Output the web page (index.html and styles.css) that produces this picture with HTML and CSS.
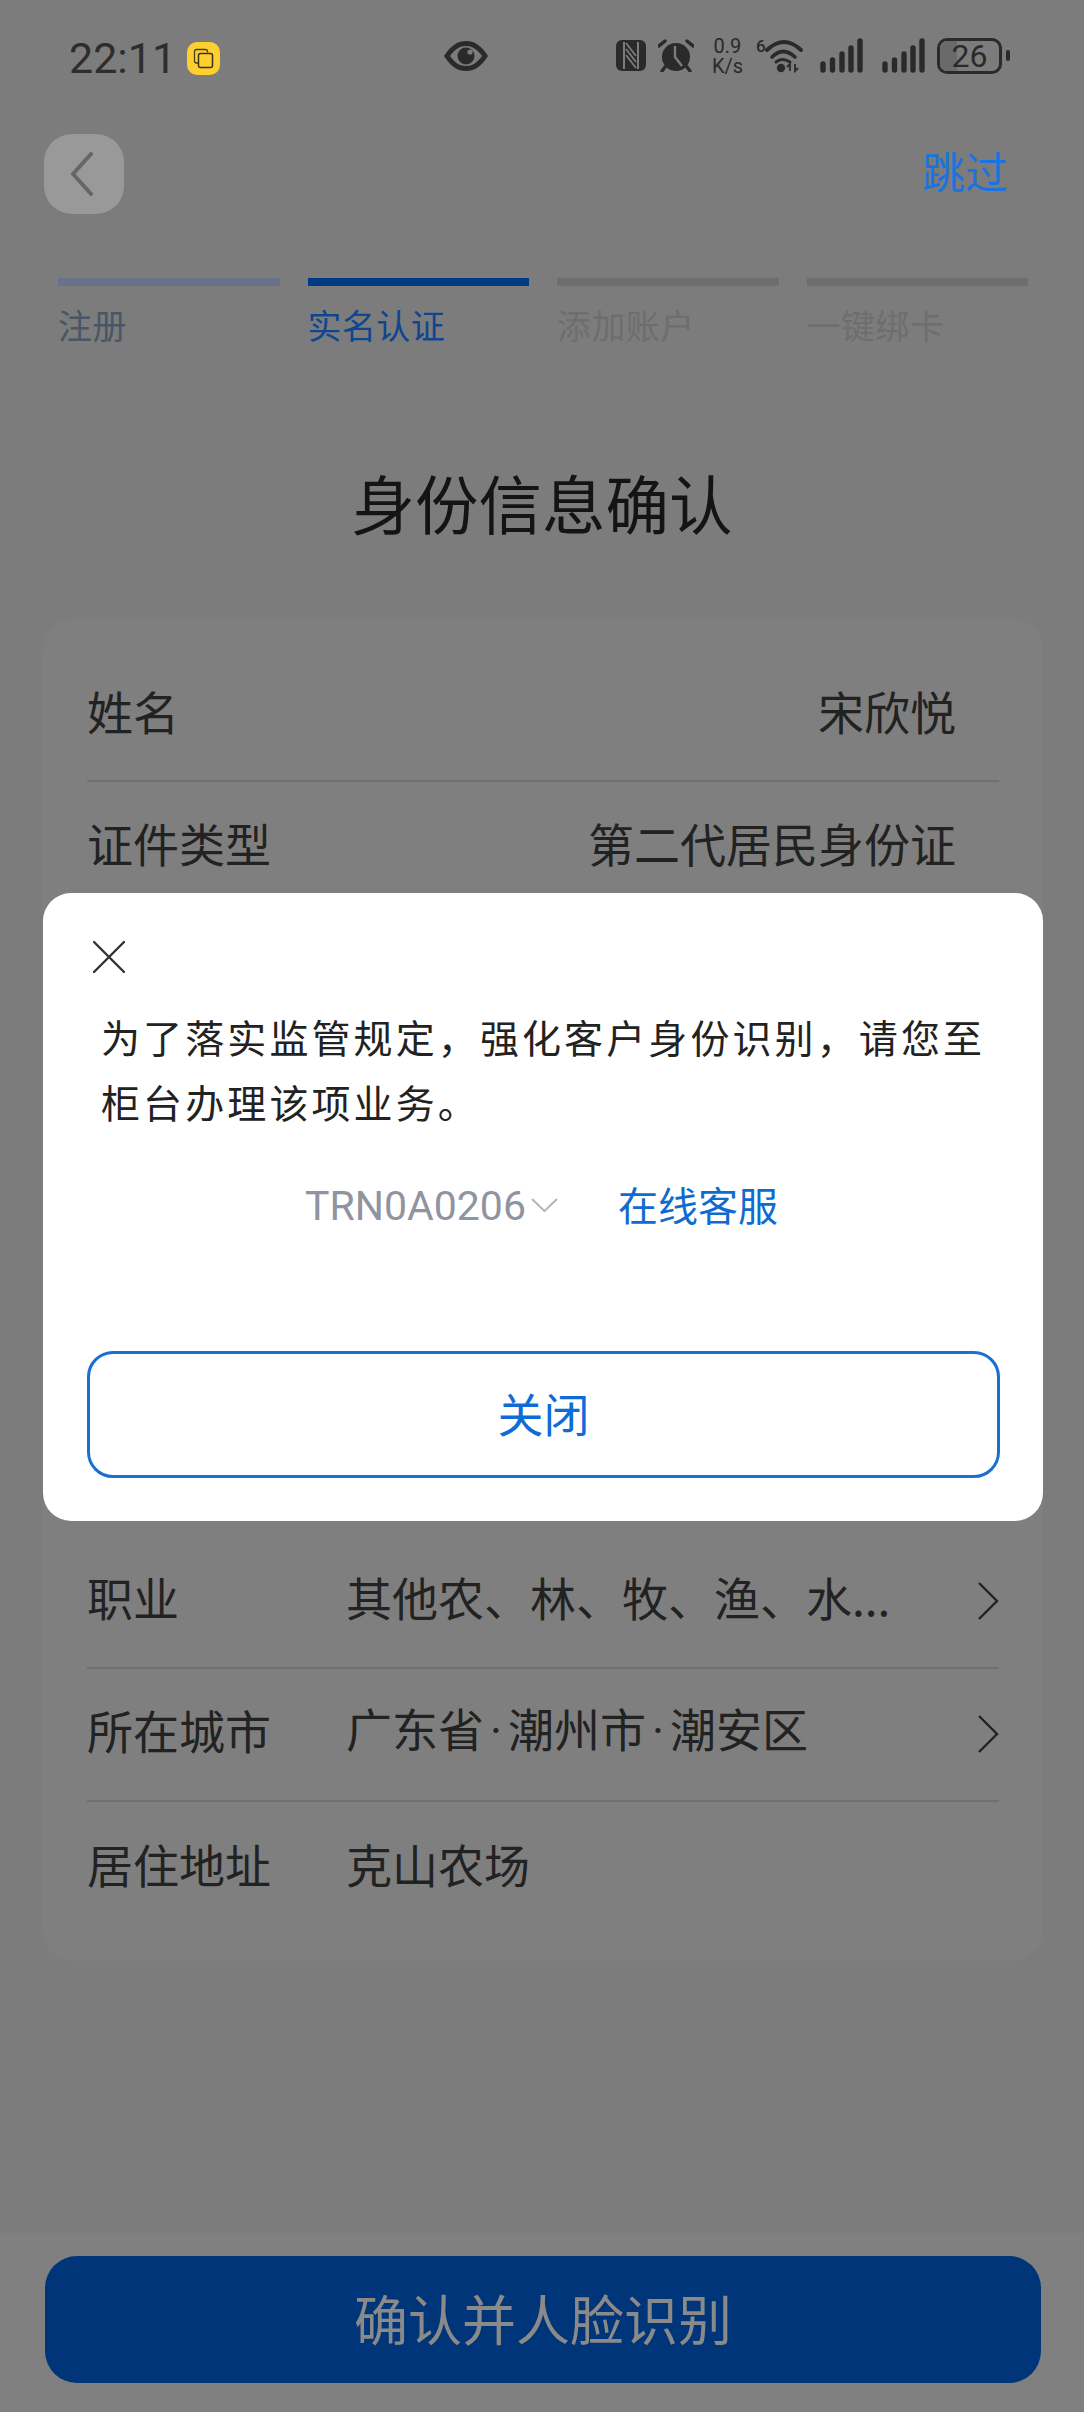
FILE: index.html
```html
<!DOCTYPE html>
<html lang="zh-CN">
<head>
<meta charset="utf-8">
<title>身份信息确认</title>
<link rel="stylesheet" href="styles.css">
</head>
<body>
<div class="app">
  <header class="status">
    <div class="status-left">
      <span class="time">22:11</span>
      <svg class="rec" width="33" height="33" viewBox="0 0 33 33"><rect width="33" height="33" rx="10" fill="#fdd02f"/><path d="M11 21H9.500a2 2 0 0 1-2-2V9.500a2 2 0 0 1 2-2h9a2 2 0 0 1 2 2v1" fill="none" stroke="#4a4020" stroke-width="1.300"/><rect x="11.500" y="11.500" width="14" height="14" rx="2" fill="none" stroke="#3a3320" stroke-width="1.500"/></svg>
    </div>
    <svg class="eye" width="46" height="30" viewBox="0 0 46 30"><path d="M1 15C8 4 15 0 23 0s15 4 22 15c-7 11-14 15-22 15S8 26 1 15z" fill="#2a2a2a"/><path d="M7 15c5-7 10-10 16-10s11 3 16 10c-5 7-10 10-16 10S12 22 7 15z" fill="#7c7c7c"/><circle cx="23" cy="15" r="8.500" fill="#2a2a2a"/><circle cx="27" cy="11" r="2.600" fill="#7c7c7c"/></svg>
    <div class="status-right">
      <svg width="30" height="31" viewBox="0 0 30 31"><rect width="30" height="31" rx="6" fill="#2a2a2a"/><path d="M8 2v27M22 2v27" stroke="#7c7c7c" stroke-width="2"/><path d="M10 9l10 13M10 3l10 13M10 15l10 13" stroke="#7c7c7c" stroke-width="1.800"/></svg>
      <svg width="36" height="33" viewBox="0 0 36 33"><path d="M1 7l6-5M35 7l-6-5" stroke="#2a2a2a" stroke-width="3.400" stroke-linecap="round"/><path d="M7 28l-3 4M29 28l3 4" stroke="#2a2a2a" stroke-width="3.400" stroke-linecap="round"/><circle cx="18" cy="18" r="14" fill="#2a2a2a"/><path d="M17 7v11l7 9" fill="none" stroke="#7c7c7c" stroke-width="2.400"/></svg>
      <div class="speed"><span>0.9</span><span>K/s</span></div>
      <div class="wifi">
        <span class="wifi-six">6</span>
        <svg width="40" height="35" viewBox="0 0 40 35"><g fill="none" stroke="#2a2a2a" stroke-linecap="round"><path d="M2 12Q19-4 36 12" stroke-width="4"/><path d="M7 19Q18 8 30 19" stroke-width="3.600"/><path d="M11 24Q17 19 25 24" stroke-width="3"/></g><circle cx="16" cy="30" r="4.200" fill="#2a2a2a"/><path d="M25 33v-7l-3 3M30 26v7l3-3" fill="none" stroke="#2a2a2a" stroke-width="1.800"/></svg>
      </div>
      <svg class="signal" width="43" height="35" viewBox="0 0 43 35"><g stroke="#2a2a2a" stroke-width="5.400" stroke-linecap="round"><path d="M3 26v6M12.500 22v10M22 16v16M31 10v22M40 3v29"/></g></svg>
      <svg class="signal" width="43" height="35" viewBox="0 0 43 35"><g stroke="#2a2a2a" stroke-width="5.400" stroke-linecap="round"><path d="M3 26v6M12.500 22v10M22 16v16M31 10v22M40 3v29"/></g></svg>
      <div class="battery">
        <div class="battery-body"><span class="battery-fill"></span><span class="battery-num">26</span></div>
        <span class="battery-nub"></span>
      </div>
    </div>
  </header>

  <nav class="topbar">
    <button class="back" type="button"><svg width="24" height="44" viewBox="0 0 24 44"><path d="M21 2L3 22l18 20" fill="none" stroke="#666" stroke-width="4" stroke-linecap="round" stroke-linejoin="round"/></svg></button>
    <span class="skip">跳过</span>
  </nav>

  <ol class="steps">
    <li class="step step-done"><span class="step-bar"></span><span class="step-label">注册</span></li>
    <li class="step step-current"><span class="step-bar"></span><span class="step-label">实名认证</span></li>
    <li class="step step-todo"><span class="step-bar"></span><span class="step-label">添加账户</span></li>
    <li class="step step-todo"><span class="step-bar"></span><span class="step-label">一键绑卡</span></li>
  </ol>

  <h1 class="title">身份信息确认</h1>

  <section class="card">
    <div class="row row-first"><span class="row-key">姓名</span><span class="row-value row-value-end">宋欣悦</span></div>
    <div class="row row-second"><span class="row-key">证件类型</span><span class="row-value row-value-end">第二代居民身份证</span></div>
    <div class="row-gap"></div>
    <div class="row row-line"><span class="row-key">职业</span><span class="row-value">其他农、林、牧、渔、水...</span>
      <svg class="chev" width="22" height="38" viewBox="0 0 22 38"><path d="M2 1l18 18L2 37" fill="none" stroke="#222" stroke-width="2.400"/></svg></div>
    <div class="row row-line"><span class="row-key">所在城市</span><span class="row-value">广东省<span class="sep">·</span>潮州市<span class="sep">·</span>潮安区</span>
      <svg class="chev" width="22" height="38" viewBox="0 0 22 38"><path d="M2 1l18 18L2 37" fill="none" stroke="#222" stroke-width="2.400"/></svg></div>
    <div class="row"><span class="row-key">居住地址</span><span class="row-value">克山农场</span></div>
  </section>

  <footer class="footer">
    <button class="confirm" type="button">确认并人脸识别</button>
  </footer>

  <div class="modal">
    <svg class="modal-close" width="32" height="32" viewBox="0 0 32 32"><path d="M1 1l30 30M31 1L1 31" stroke="#333" stroke-width="2.400" stroke-linecap="round"/></svg>
    <p class="modal-text">为了落实监管规定，强化客户身份识别，请您至柜台办理该项业务。</p>
    <div class="modal-code">
      <span class="code">TRN0A0206</span>
      <svg class="code-chev" width="27" height="14" viewBox="0 0 27 14"><path d="M1 1l12.500 12L26 1" fill="none" stroke="#b5b5b5" stroke-width="2"/></svg>
      <span class="service">在线客服</span>
    </div>
    <button class="modal-btn" type="button">关闭</button>
  </div>
</div>
</body>
</html>
```
FILE: styles.css
```css
* { box-sizing: border-box; }
html, body { margin: 0; padding: 0; }
body {
  width: 1084px;
  height: 2412px;
  overflow: hidden;
  font-family: "Noto Sans CJK SC", "Noto Sans", sans-serif;
  background: #7c7c7c;
}
.app {
  position: relative;
  width: 1084px;
  height: 2412px;
  display: flex;
  flex-direction: column;
}

/* status bar */
.status {
  height: 134px;
  padding: 37px 74px 0 69px;
  display: flex;
  align-items: flex-start;
  color: #2a2a2a;
}
.status-left { display: flex; align-items: center; gap: 11px; height: 36px; margin-top: 3px; }
.time { font-family: Roboto, sans-serif; font-size: 43px; letter-spacing: 0; line-height: 36px; color: #2d2d2d; }
.eye { margin-left: 223px; margin-top: 4px; }
.status-right { margin-left: auto; display: flex; align-items: center; height: 37px; }
.status-right > :nth-child(1) { margin-right: 12px; }
.status-right > :nth-child(2) { margin-right: 17px; }
.status-right > :nth-child(3) { margin-right: 12px; }
.status-right > :nth-child(4) { margin-right: 15px; }
.status-right > :nth-child(5) { margin-right: 19px; }
.status-right > :nth-child(6) { margin-right: 12px; }
.speed {
  width: 33px;
  display: flex;
  flex-direction: column;
  align-items: center;
  font-family: Roboto, sans-serif;
  font-size: 20px;
  line-height: 20px;
  color: #2a2a2a;
}
.wifi { display: flex; align-items: flex-start; height: 36px; }
.wifi-six { font-family: Roboto, sans-serif; font-size: 17px; line-height: 17px; width: 9px; font-weight: 500; }
.signal { display: block; }
.battery { display: flex; align-items: center; gap: 4px; }
.battery-body {
  position: relative;
  width: 65px;
  height: 36px;
  border: 3px solid #2a2a2a;
  border-radius: 10px;
  overflow: hidden;
  display: flex;
  align-items: center;
  justify-content: center;
}
.battery-fill { position: absolute; left: 0; top: 0; bottom: 0; width: 17px; background: #6a6a6a; }
.battery-num { position: relative; font-family: Roboto, sans-serif; font-size: 32px; line-height: 30px; color: #2a2a2a; }
.battery-nub { width: 4px; height: 11px; background: #2a2a2a; border-radius: 2px; }

/* nav */
.topbar {
  height: 144px;
  padding: 0 76px 0 44px;
  display: flex;
  justify-content: space-between;
  align-items: flex-start;
}
.back {
  width: 80px;
  height: 80px;
  padding: 0;
  border: 0;
  border-radius: 28px;
  background: #999;
  display: flex;
  align-items: center;
  justify-content: center;
}
.back svg { margin-right: 5px; }
.skip { font-size: 43px; line-height: 42px; margin-top: 15px; color: #1a73e0; }

/* steps */
.steps {
  list-style: none;
  margin: 0;
  padding: 0 56px 0 58px;
  display: flex;
  gap: 28px;
}
.step { width: 222px; display: flex; flex-direction: column; }
.step-bar { height: 8px; }
.step-label { margin-top: 21px; font-size: 34px; line-height: 36px; letter-spacing: .4px; }
.step-done .step-bar { background: #68738a; }
.step-done .step-label { color: #4a5567; }
.step-current .step-bar { background: #003a82; }
.step-current .step-label { color: #10468f; }
.step-todo .step-bar { background: #6e6e70; }
.step-todo .step-label { color: #6e6e6e; }

.title {
  margin: 113px 0 0;
  height: 90px;
  text-align: center;
  font-size: 63.500px;
  line-height: 90px;
  font-weight: 400;
  color: #141414;
}

/* card */
.card {
  margin: 73px 41px 0 43px;
  height: 1342px;
  background: #7f7f7f;
  border-radius: 30px;
  padding: 0 44px;
  color: #222;
}
.row {
  height: 133px;
  padding-bottom: 12px;
  display: flex;
  align-items: center;
  font-size: 46px;
  line-height: 60px;
}
.row-first { height: 163px; padding-top: 26px; padding-bottom: 6px; border-bottom: 2px solid #707070; }
.row-second { height: 122px; padding-bottom: 2px; }
.row-gap { height: 632px; }
.row-line { border-bottom: 2px solid #707070; }
.row-key { width: 259px; flex: none; }
.row-value { flex: 1; }
.row-value-end { text-align: right; padding-right: 43px; }
.sep { font-family: Roboto, sans-serif; padding: 0 6px; }
.chev { flex: none; margin-top: 10px; }

/* footer */
.footer {
  margin-top: auto;
  height: 179px;
  padding: 23px 43px 0 45px;
  background: #808081;
}
.confirm {
  width: 996px;
  height: 127px;
  padding: 0 0 5px;
  border: 0;
  border-radius: 32px;
  background: #00357a;
  color: #8a8a8a;
  font-family: inherit;
  font-size: 54px;
}

/* modal */
.modal {
  position: absolute;
  left: 43px;
  top: 893px;
  width: 1000px;
  height: 628px;
  background: #fff;
  border-radius: 28px;
  padding: 48px 44px 0;
}
.modal-close { display: block; margin-left: 6px; }
.modal-text {
  margin: 31px 0 0 14px;
  font-size: 39px;
  line-height: 65px;
  letter-spacing: 3.100px;
  color: #222;
}
.modal-code {
  margin-top: 41px;
  height: 60px;
  display: flex;
  align-items: center;
  padding-left: 218px;
}
.code { font-family: Roboto, sans-serif; font-size: 41px; color: #8f94a0; margin-top: 2px; }
.code-chev { margin-left: 5px; margin-right: 60px; }
.service { font-size: 40px; color: #0f6bd0; margin-bottom: 2px; }
.modal-btn {
  display: block;
  margin-top: 116px;
  width: 913px;
  height: 127px;
  padding: 0 0 5px;
  background: #fff;
  border: 3px solid #1a70d0;
  border-radius: 26px;
  font-family: inherit;
  font-size: 46px;
  color: #0f6bd8;
}
```
